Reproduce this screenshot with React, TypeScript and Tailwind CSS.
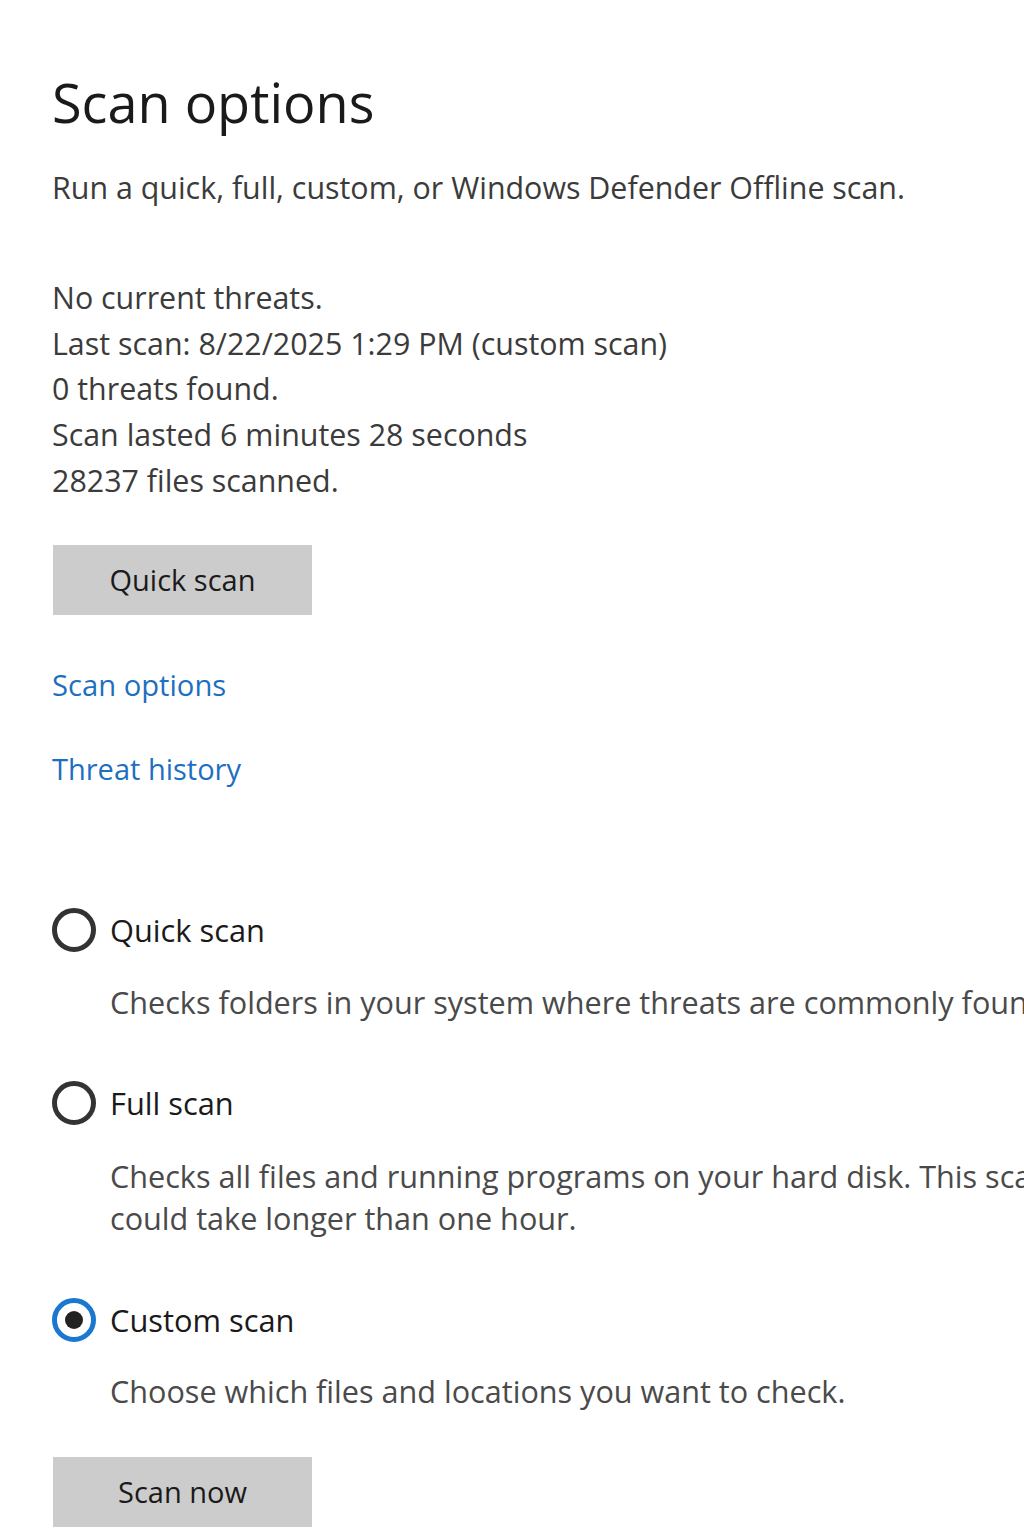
import React from "react";

function Radio({ checked }: { checked?: boolean }) {
  if (checked) {
    return (
      <span className="flex h-[44px] w-[44px] shrink-0 items-center justify-center rounded-full border-[5px] border-[#1a78d0]">
        <span className="h-[18px] w-[18px] rounded-full bg-[#222222]" />
      </span>
    );
  }
  return <span className="block h-[44px] w-[44px] shrink-0 rounded-full border-[5px] border-[#333333]" />;
}

function Option({
  label,
  checked,
  lines,
  rowMt,
  descMt,
}: {
  label: string;
  checked?: boolean;
  lines: string[];
  rowMt: string;
  descMt: string;
}) {
  return (
    <div>
      <div className={`flex h-[44px] items-center gap-[14px] ${rowMt}`}>
        <Radio checked={checked} />
        <span className="text-[30.8px] leading-[44px] text-[#1a1a1a]">{label}</span>
      </div>
      <div className={`ml-[58px] text-[30.6px] leading-[42px] text-[#4a4a4a] whitespace-nowrap ${descMt}`}>
        {lines.map((l, i) => (
          <div key={i}>{l}</div>
        ))}
      </div>
    </div>
  );
}

export default function App() {
  return (
    <div className="h-[1536px] w-[1024px] overflow-hidden bg-white pl-[52px] pt-[70px] font-['Open_Sans','Noto_Sans',sans-serif]">
      <h1 className="text-[54px] font-normal leading-[64px] text-[#1a1a1a]">Scan options</h1>
      <p className="mt-[34px] whitespace-nowrap text-[30.4px] leading-[40px] text-[#3b3b3b]">
        Run a quick, full, custom, or Windows Defender Offline scan.
      </p>

      <div className="mt-[67px] text-[30.4px] leading-[45.7px] text-[#3b3b3b] whitespace-nowrap">
        <div>No current threats.</div>
        <div>Last scan: 8/22/2025 1:29 PM (custom scan)</div>
        <div>0 threats found.</div>
        <div>Scan lasted 6 minutes 28 seconds</div>
        <div>28237 files scanned.</div>
      </div>

      <button className="ml-[1px] mt-[41px] flex h-[70px] w-[259px] items-center justify-center bg-[#cccccc] text-[29px] text-[#1a1a1a]">
        Quick scan
      </button>

      <div className="mt-[50px] text-[29.2px] leading-[40px] text-[#1e6fc0]">Scan options</div>
      <div className="mt-[44px] text-[29px] leading-[40px] text-[#1e6fc0]">Threat history</div>

      <Option
        label="Quick scan"
        rowMt="mt-[119.5px]"
        descMt="mt-[28.5px]"
        lines={["Checks folders in your system where threats are commonly found."]}
      />
      <Option
        label="Full scan"
        rowMt="mt-[58px]"
        descMt="mt-[30px]"
        lines={[
          "Checks all files and running programs on your hard disk. This scan",
          "could take longer than one hour.",
        ]}
      />
      <Option
        label="Custom scan"
        checked
        rowMt="mt-[59.5px]"
        descMt="mt-[28px]"
        lines={["Choose which files and locations you want to check."]}
      />

      <button className="ml-[1px] mt-[45px] flex h-[70px] w-[259px] items-center justify-center bg-[#cccccc] text-[29px] text-[#1a1a1a]">
        Scan now
      </button>
    </div>
  );
}
